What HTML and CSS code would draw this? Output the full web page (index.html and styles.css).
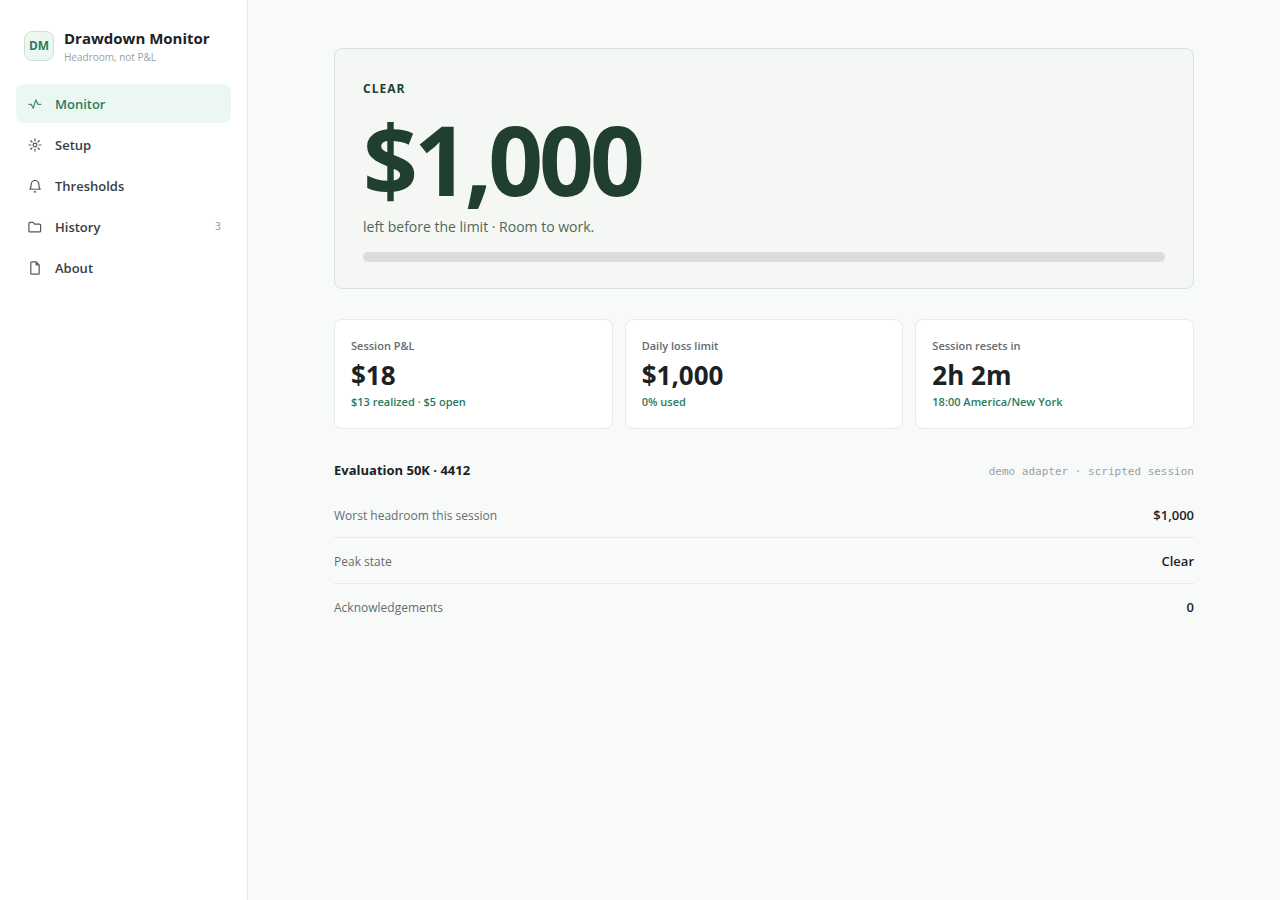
FILE: index.html
```html
<!DOCTYPE html>
<html lang="en">
<head>
    <meta charset="UTF-8">
    <meta name="viewport" content="width=device-width, initial-scale=1.0">
    <title>Drawdown Monitor</title>
    <link rel="stylesheet" href="styles.css">
</head>
<body>

<div class="app">
    <aside class="sidebar">
        <div class="brand">
            <span class="brand-mark">DM</span>
            <div class="brand-text">
                <div class="brand-name">Drawdown Monitor</div>
                <div class="brand-tagline">Headroom, not P&amp;L</div>
            </div>
        </div>

        <nav class="nav">
            <a href="#monitor" class="nav-item active" aria-current="page">
                <svg class="icon" viewBox="0.5 0.5 15 15"><path d="M1.500 8.500h2.500L6 12.500l3-9 2.200 5h3"/></svg>
                <span>Monitor</span>
            </a>
            <a href="#setup" class="nav-item">
                <svg class="icon" viewBox="0.5 0.5 15 15"><circle cx="8" cy="8" r="2"/><path d="M8 1.500v2M8 12.500v2M1.500 8h2M12.500 8h2M3.400 3.400l1.400 1.400M11.200 11.200l1.400 1.400M3.400 12.600l1.400-1.400M11.200 4.800l1.400-1.400"/></svg>
                <span>Setup</span>
            </a>
            <a href="#thresholds" class="nav-item">
                <svg class="icon" viewBox="0.5 0.5 15 15"><path d="M2.500 11.500h11c-1-1-1.300-2.300-1.300-4.700a4.200 4.800 0 0 0-8.400 0c0 2.400-.3 3.700-1.300 4.700zM7 14.200h2"/></svg>
                <span>Thresholds</span>
            </a>
            <a href="#history" class="nav-item">
                <svg class="icon" viewBox="0.5 0.5 15 15"><path d="M1.500 4a1 1 0 0 1 1-1h3.300l1.700 2H13a1 1 0 0 1 1 1v6.300a1 1 0 0 1-1 1H2.500a1 1 0 0 1-1-1z"/></svg>
                <span>History</span>
                <span class="nav-count">3</span>
            </a>
            <a href="#about" class="nav-item">
                <svg class="icon" viewBox="0.5 0.5 15 15"><path d="M9.300 1.500H4.500a1 1 0 0 0-1 1v11a1 1 0 0 0 1 1h7a1 1 0 0 0 1-1V4.700zM9.300 1.500v3.200h3.200"/></svg>
                <span>About</span>
            </a>
        </nav>
    </aside>

    <main class="main">
        <div class="content">
            <section class="hero">
                <h1 class="hero-state">Clear</h1>
                <div class="hero-value">$1,000</div>
                <p class="hero-note">left before the limit · Room to work.</p>
                <div class="hero-bar" role="progressbar" aria-label="Limit used" aria-valuenow="0" aria-valuemin="0" aria-valuemax="100"></div>
            </section>

            <section class="stats">
                <div class="stat">
                    <div class="stat-label">Session P&amp;L</div>
                    <div class="stat-value">$18</div>
                    <div class="stat-note">$13 realized · $5 open</div>
                </div>
                <div class="stat">
                    <div class="stat-label">Daily loss limit</div>
                    <div class="stat-value">$1,000</div>
                    <div class="stat-note">0% used</div>
                </div>
                <div class="stat">
                    <div class="stat-label">Session resets in</div>
                    <div class="stat-value">2h 2m</div>
                    <div class="stat-note">18:00 America/New York</div>
                </div>
            </section>

            <section>
                <div class="account-head">
                    <h2>Evaluation 50K · 4412</h2>
                    <span class="account-source">demo adapter · scripted session</span>
                </div>
                <dl class="details">
                    <div class="detail-row">
                        <dt>Worst headroom this session</dt>
                        <dd>$1,000</dd>
                    </div>
                    <div class="detail-row">
                        <dt>Peak state</dt>
                        <dd>Clear</dd>
                    </div>
                    <div class="detail-row">
                        <dt>Acknowledgements</dt>
                        <dd>0</dd>
                    </div>
                </dl>
            </section>
        </div>
    </main>
</div>

</body>
</html>
```

FILE: styles.css
```css
* {
    box-sizing: border-box;
}

body {
    margin: 0;
    background-color: #f8faf9;
    color: #1c2224;
    font-family: "Segoe UI", "Open Sans", "Noto Sans", sans-serif;
    font-size: 13px;
    line-height: 20px;
}

h1, h2, p, dl, dd {
    margin: 0;
}

.app {
    display: flex;
    min-height: 100vh;
}

/* Sidebar */
.sidebar {
    width: 248px;
    flex-shrink: 0;
    padding: 27px 16px;
    background-color: #ffffff;
    border-right: 1px solid #e6eae8;
}

.brand {
    display: flex;
    align-items: center;
    gap: 10px;
    padding: 0 8px;
    margin-bottom: 19px;
}

.brand-mark {
    display: flex;
    align-items: center;
    justify-content: center;
    width: 30px;
    height: 30px;
    border: 1px solid #c9e2d8;
    border-radius: 8px;
    background-color: #edf7f2;
    color: #2a7a5e;
    font-size: 12px;
    font-weight: 700;
}

.brand-name {
    font-size: 15px;
    font-weight: 700;
    line-height: 22px;
    white-space: nowrap;
}

.brand-tagline {
    color: #9ba1a5;
    font-size: 10px;
    line-height: 16px;
}

.nav {
    display: flex;
    flex-direction: column;
    gap: 2px;
}

.nav-item {
    display: flex;
    align-items: center;
    gap: 13px;
    height: 39px;
    padding: 0 10px 0 12px;
    border-radius: 8px;
    color: #373d42;
    font-weight: 600;
    text-decoration: none;
}

.nav-item:hover {
    background-color: #f4f7f5;
}

.nav-item.active {
    background-color: #edf7f2;
    color: #2a7a5e;
}

.icon {
    width: 14px;
    height: 14px;
    fill: none;
    stroke: currentColor;
    stroke-width: 1.3;
    stroke-linecap: round;
    stroke-linejoin: round;
    opacity: 0.85;
}

.nav-count {
    margin-left: auto;
    color: #9ba1a5;
    font-family: Consolas, "DejaVu Sans Mono", monospace;
    font-size: 10px;
    font-weight: 400;
}

/* Main column */
.main {
    flex: 1;
    padding: 48px;
}

.content {
    max-width: 860px;
    margin: 0 auto;
}

.hero {
    padding: 30px 28px 26px;
    margin-bottom: 30px;
    border: 1px solid #d5e2db;
    border-radius: 8px;
    background-color: #f5f7f4;
    color: #213f30;
}

.hero-state {
    font-size: 12px;
    font-weight: 700;
    line-height: 20px;
    letter-spacing: 1px;
    text-transform: uppercase;
}

.hero-value {
    margin: 12px 0 10px;
    font-size: 96px;
    font-weight: 700;
    line-height: 96px;
    letter-spacing: -4px;
}

.hero-note {
    margin-bottom: 15px;
    color: #4f675b;
    font-size: 14px;
}

.hero-bar {
    height: 10px;
    border-radius: 5px;
    background-color: #dbddda;
}

.stats {
    display: grid;
    grid-template-columns: repeat(3, 1fr);
    gap: 12px;
    margin-bottom: 31px;
}

.stat {
    padding: 16px 16px 18px;
    border: 1px solid #e6eae8;
    border-radius: 8px;
    background-color: #ffffff;
}

.stat-label,
.stat-note {
    font-size: 11px;
    font-weight: 600;
}

.stat-label {
    color: #656c70;
    line-height: 20px;
}

.stat-value {
    font-size: 26px;
    font-weight: 700;
    line-height: 38px;
}

.stat-note {
    color: #2a7a5e;
    line-height: 16px;
}

.account-head {
    display: flex;
    justify-content: space-between;
    align-items: baseline;
    margin-bottom: 12px;
}

.account-head h2 {
    font-size: 13px;
    font-weight: 700;
}

.account-source {
    color: #9ba1a5;
    font-family: Consolas, "DejaVu Sans Mono", monospace;
    font-size: 11px;
    line-height: 16px;
}

.detail-row {
    display: flex;
    justify-content: space-between;
    align-items: baseline;
    padding: 13px 0 12px;
    border-bottom: 1px solid #e6eae8;
}

.detail-row:last-child {
    border-bottom: none;
}

.detail-row dt {
    color: #656c70;
    font-size: 12px;
    line-height: 16px;
}

.detail-row dd {
    font-weight: 600;
}
```
